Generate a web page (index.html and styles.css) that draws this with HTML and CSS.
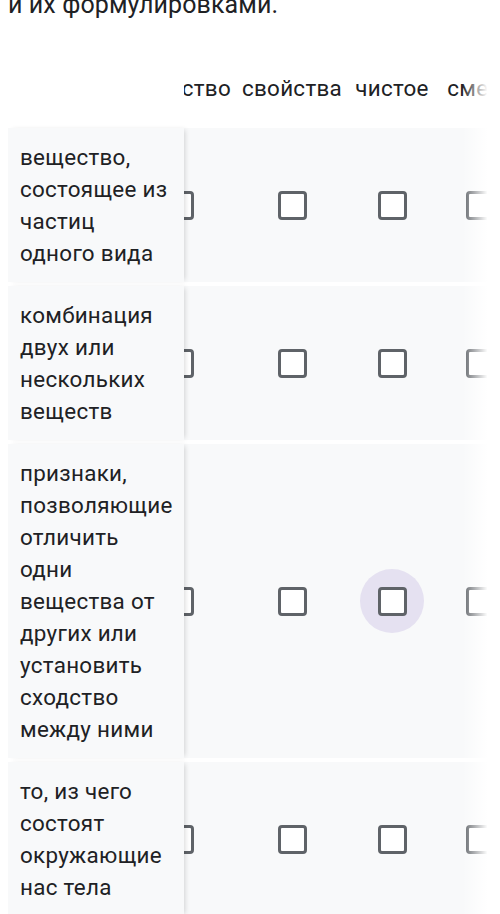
FILE: index.html
```html
<!DOCTYPE html>
<html lang="ru">
<head>
<meta charset="utf-8">
<link rel="stylesheet" href="styles.css">
</head>
<body>
<div class="title">и их формулировками.</div>
<div class="grid-wrap">
  <div class="grid">
    <div class="corner"></div>
    <div class="head head-first"><span>вещество</span></div>
    <div class="head">свойства</div>
    <div class="head">чистое</div>
    <div class="head">смесь</div>

    <div class="label">вещество, состоящее из частиц одного вида</div>
    <div class="cell first"><span class="hit"><span class="box"></span></span></div>
    <div class="cell"><span class="hit"><span class="box"></span></span></div>
    <div class="cell"><span class="hit"><span class="box"></span></span></div>
    <div class="cell"><span class="hit"><span class="box"></span></span></div>

    <div class="label">комбинация двух или нескольких веществ</div>
    <div class="cell first"><span class="hit"><span class="box"></span></span></div>
    <div class="cell"><span class="hit"><span class="box"></span></span></div>
    <div class="cell"><span class="hit"><span class="box"></span></span></div>
    <div class="cell"><span class="hit"><span class="box"></span></span></div>

    <div class="label">признаки, позволяющие отличить одни вещества от других или установить сходство между ними</div>
    <div class="cell first"><span class="hit"><span class="box"></span></span></div>
    <div class="cell"><span class="hit"><span class="box"></span></span></div>
    <div class="cell"><span class="hit focused"><span class="box"></span></span></div>
    <div class="cell"><span class="hit"><span class="box"></span></span></div>

    <div class="label">то, из чего состоят окружающие нас тела</div>
    <div class="cell first"><span class="hit"><span class="box"></span></span></div>
    <div class="cell"><span class="hit"><span class="box"></span></span></div>
    <div class="cell"><span class="hit"><span class="box"></span></span></div>
    <div class="cell"><span class="hit"><span class="box"></span></span></div>
  </div>
  <div class="fade"></div>
</div>
</body>
</html>
```

FILE: styles.css
```css
html, body {
  margin: 0;
  padding: 0;
  background: #ffffff;
  overflow: hidden;
}

body {
  font-family: Roboto, "Noto Sans", Arial, sans-serif;
  color: #202124;
  padding: 0 8px;
}

.title {
  font-size: 25px;
  line-height: 32px;
  margin-top: -11px;
  letter-spacing: 0.1px;
}

.grid-wrap {
  position: relative;
  overflow: hidden;
  margin-top: 31px;
}

.grid {
  display: grid;
  grid-template-columns: 176px 52px 112px 88px 88px;
  row-gap: 4px;
  font-size: 22.4px;
  line-height: 32px;
  letter-spacing: 0.3px;
}

.corner {
  background: #ffffff;
  position: relative;
  z-index: 2;
}

.head {
  padding: 20px 0;
  text-align: center;
  white-space: nowrap;
  overflow: hidden;
}

.head-first {
  text-align: right;
  padding-right: 5px;
  display: flex;
  justify-content: flex-end;
}

.label {
  background: #f8f9fa;
  padding: 13px 12px 13px 12px;
  position: relative;
  z-index: 1;
  box-shadow: 3px 0 5px -2px rgba(0, 0, 0, 0.16);
}

.cell {
  background: #f8f9fa;
  display: flex;
  align-items: center;
  justify-content: center;
}

.cell.first {
  justify-content: flex-start;
}

.cell.first .hit {
  margin-left: -37px;
}

.hit {
  width: 64px;
  height: 64px;
  flex: none;
  border-radius: 50%;
  display: flex;
  align-items: center;
  justify-content: center;
}

.hit.focused {
  background: #e5e1f1;
}

.box {
  width: 23px;
  height: 23px;
  border: 3px solid #5f6368;
  border-radius: 4px;
  background: #ffffff;
}

.fade {
  position: absolute;
  top: 0;
  right: 0;
  bottom: 0;
  width: 30px;
  background: linear-gradient(to right, rgba(255, 255, 255, 0), #ffffff 85%);
  z-index: 3;
}
```
